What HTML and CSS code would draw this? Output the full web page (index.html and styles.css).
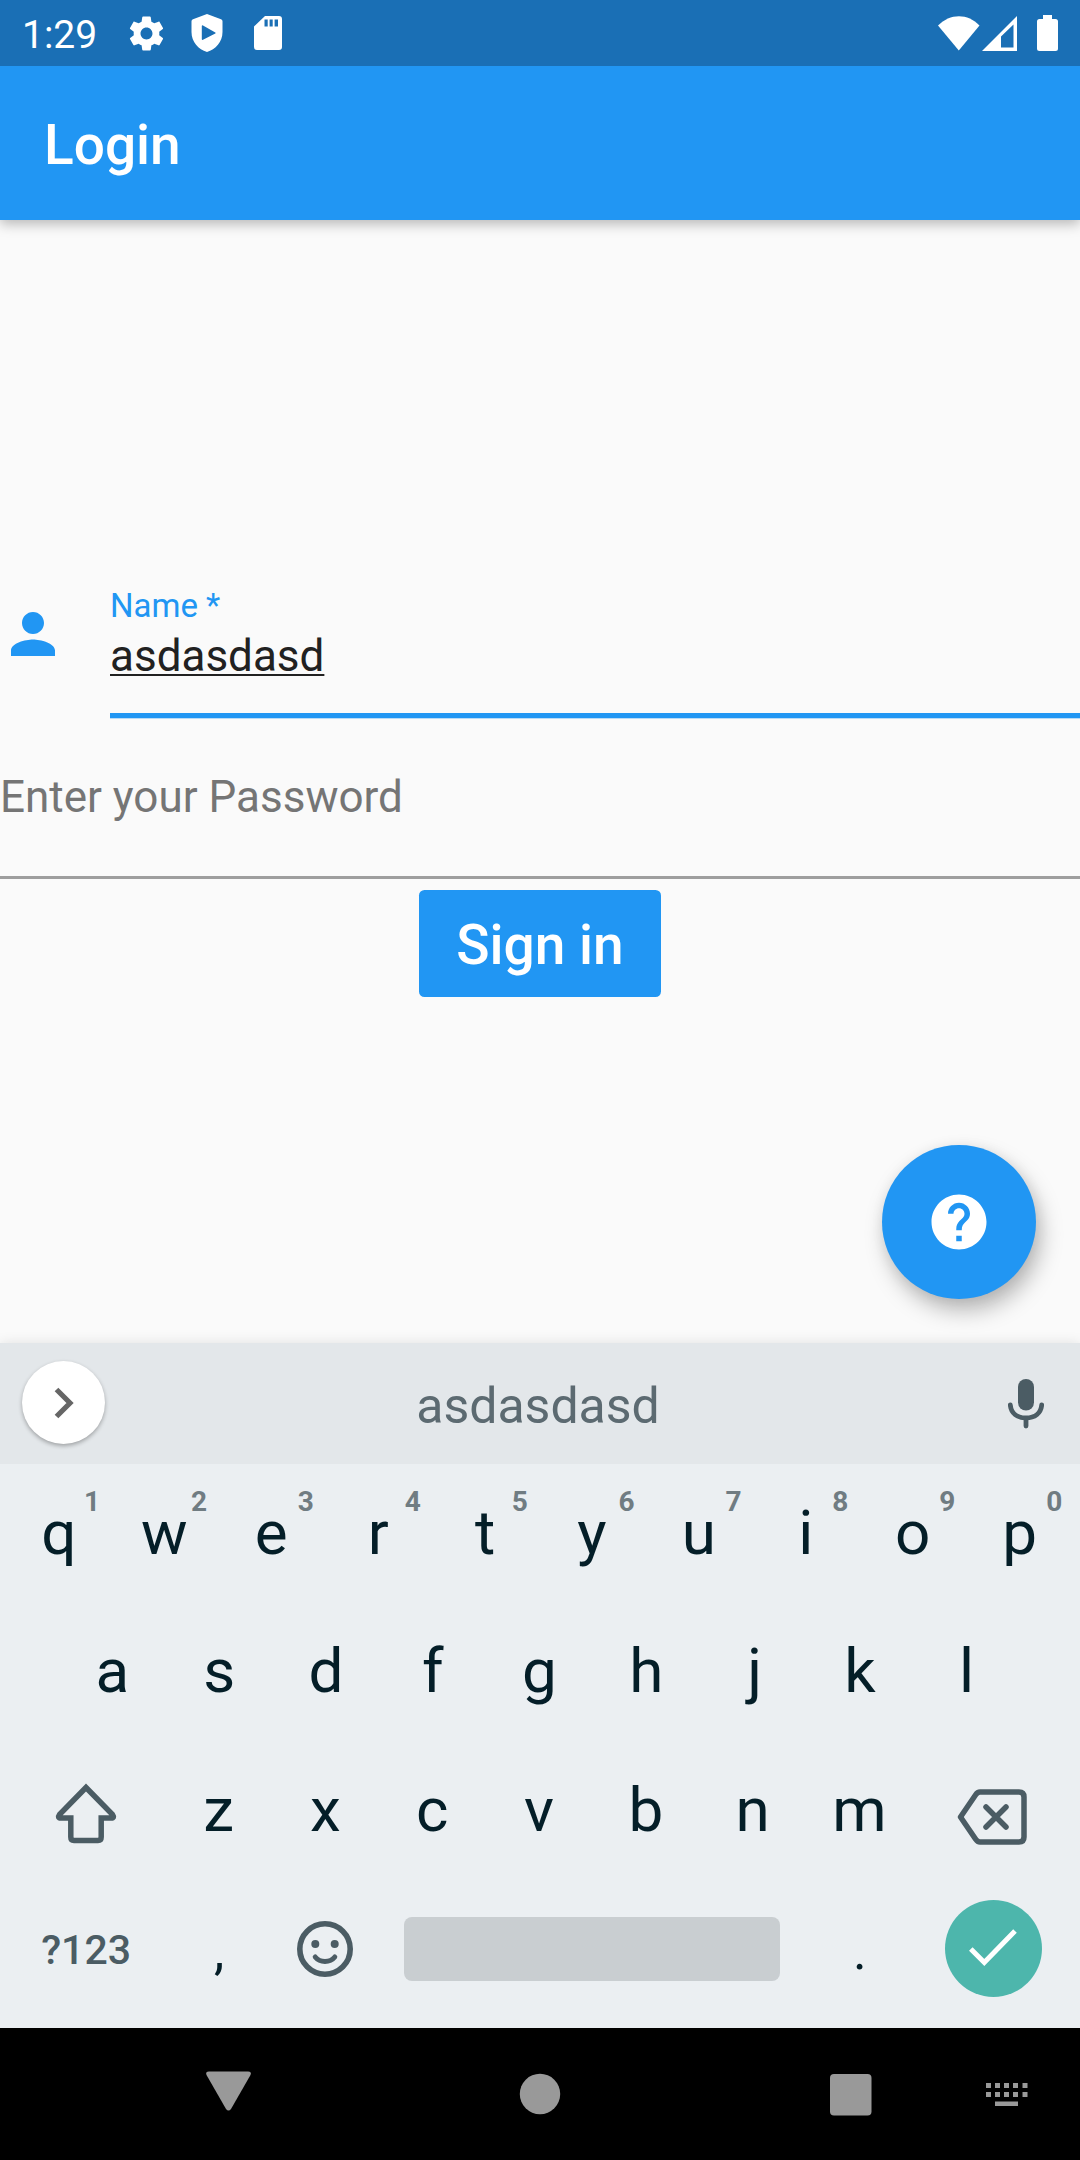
FILE: index.html
```html
<!DOCTYPE html>
<html lang="en">
<head>
<meta charset="utf-8">
<title>Login</title>
<link rel="stylesheet" href="styles.css">
</head>
<body>
<div class="screen">
  <header class="status-bar">
    <span class="clock">1:29</span>
    <svg class="status-gear" viewBox="0 0 24 24"><path d="M19.43 12.98c.04-.32.07-.64.07-.98s-.03-.66-.07-.98l2.11-1.65c.19-.15.24-.42.12-.64l-2-3.46c-.12-.22-.39-.3-.61-.22l-2.49 1c-.52-.4-1.08-.73-1.69-.98l-.38-2.65C14.46 2.18 14.25 2 14 2h-4c-.25 0-.46.18-.49.42l-.38 2.65c-.61.25-1.17.59-1.69.98l-2.49-1c-.23-.09-.49 0-.61.22l-2 3.46c-.13.22-.07.49.12.64l2.11 1.65c-.04.32-.07.65-.07.98s.03.66.07.98l-2.11 1.65c-.19.15-.24.42-.12.64l2 3.46c.12.22.39.3.61.22l2.49-1c.52.4 1.08.73 1.69.98l.38 2.65c.03.24.24.42.49.42h4c.25 0 .46-.18.49-.42l.38-2.65c.61-.25 1.17-.59 1.69-.98l2.49 1c.23.09.49 0 .61-.22l2-3.46c.12-.22.07-.49-.12-.64l-2.11-1.65zM12 15.5c-1.93 0-3.5-1.57-3.5-3.5s1.57-3.5 3.5-3.5 3.5 1.57 3.5 3.5-1.57 3.5-3.5 3.5z"/></svg>
    <svg class="status-shield" viewBox="0 0 32 38"><path fill-rule="evenodd" d="M16 0L30 5.200Q31.500 5.700 31.500 7.200V18C31.500 28 24.500 35.500 16 38C7.500 35.500.500 28 .500 18V7.200Q.500 5.700 2 5.200zM12 11.500Q10.800 11 10.800 12.300V25Q10.800 26.300 12 25.800L24.300 19.600Q25.200 19 24.300 18.400z"/></svg>
    <svg class="status-sd" viewBox="0 0 28 34"><path fill-rule="evenodd" d="M11 0H25Q28 0 28 3V31Q28 34 25 34H3Q0 34 0 31V10.500zM10.500 3.500V10.500H13.700V3.500zM15.600 3.500V10.500H18.700V3.500zM20.600 3.500V10.500H24V3.500z"/></svg>
    <span class="spacer"></span>
    <svg class="status-wifi" viewBox="0 0 42 35"><path d="M0 9.500C12 -3 30 -3 41.500 9.500L20.800 34.500z"/></svg>
    <svg class="status-signal" viewBox="0 0 35 35"><path fill-rule="evenodd" d="M35 0V35H0zM31.500 8.500L19 20.500V31.500H31.500z"/></svg>
    <svg class="status-battery" viewBox="0 0 21 36"><path d="M6 0H15V4H18.500Q21 4 21 6.500V33.500Q21 36 18.500 36H2.500Q0 36 0 33.500V6.500Q0 4 2.500 4H6z"/></svg>
  </header>
  <div class="app-bar"><h1>Login</h1></div>

  <main class="content">
    <div class="name-row">
      <svg class="person" viewBox="0 0 24 24"><path d="M12 12c2.210 0 4-1.790 4-4s-1.790-4-4-4-4 1.790-4 4 1.790 4 4 4zm0 2c-2.670 0-8 1.340-8 4v2h16v-2c0-2.660-5.330-4-8-4z"/></svg>
      <div class="field">
        <div class="label">Name *</div>
        <div class="value"><span>asdasdasd</span></div>
      </div>
    </div>
    <div class="password">Enter your Password</div>
    <button class="sign-in">Sign in</button>
    <button class="fab" aria-label="Help"><svg viewBox="0 0 24 24"><path d="M12 2C6.480 2 2 6.480 2 12s4.480 10 10 10 10-4.480 10-10S17.520 2 12 2zm1 17h-2v-2h2v2zm2.070-7.750l-.9.920C13.450 12.900 13 13.500 13 15h-2v-.5c0-1.100.450-2.100 1.170-2.830l1.240-1.260c.370-.360.590-.860.590-1.410 0-1.100-.9-2-2-2s-2 .9-2 2H8c0-2.210 1.790-4 4-4s4 1.790 4 4c0 .880-.360 1.680-.930 2.250z"/></svg></button>
  </main>

  <section class="keyboard">
    <div class="suggestions">
      <div class="expand"><svg viewBox="0 0 20 32"><path d="M2.500 2.500L16 16L2.500 29.500"/></svg></div>
      <span class="suggestion">asdasdasd</span>
      <svg class="mic" viewBox="0 0 36 50"><rect x="10" y="0" width="16" height="31.500" rx="8"/><path d="M2.300 26C3 34.500 9.500 39 18 39S33 34.500 33.700 26M18 39V47"/></svg>
    </div>
    <div class="keys">
      <div class="row row-top">
        <div class="key">q<sup>1</sup></div><div class="key">w<sup>2</sup></div><div class="key">e<sup>3</sup></div><div class="key">r<sup>4</sup></div><div class="key">t<sup>5</sup></div><div class="key">y<sup>6</sup></div><div class="key">u<sup>7</sup></div><div class="key">i<sup>8</sup></div><div class="key">o<sup>9</sup></div><div class="key">p<sup>0</sup></div>
      </div>
      <div class="row row-home">
        <div class="key">a</div><div class="key">s</div><div class="key">d</div><div class="key">f</div><div class="key">g</div><div class="key">h</div><div class="key shifted">j</div><div class="key">k</div><div class="key">l</div>
      </div>
      <div class="row row-lower">
        <div class="key wide"><svg class="shift" viewBox="0 0 62 62"><path d="M31 5.500L57.500 32.500Q60 36 56 36H46.200V55Q46.200 58.500 43 58.500H19Q15.800 58.500 15.800 55V36H6Q2 36 4.500 32.500z"/></svg></div>
        <div class="key">z</div><div class="key">x</div><div class="key">c</div><div class="key">v</div><div class="key">b</div><div class="key">n</div><div class="key">m</div>
        <div class="key wide"><svg class="backspace" viewBox="0 0 70 56"><path d="M23 3H62Q67 3 67 8V48Q67 53 62 53H23Q20.500 53 18.500 50L3.500 28L18.500 6Q20.500 3 23 3zM29 18L49 38M49 18L29 38"/></svg></div>
      </div>
      <div class="row row-bottom">
        <div class="key wide symbols">?123</div>
        <div class="key punct">,</div>
        <div class="key"><svg class="emoji" viewBox="0 0 56 56"><circle class="line" cx="28" cy="28" r="25.200"/><circle cx="18.300" cy="23" r="4"/><circle cx="37.700" cy="23" r="4"/><path class="line thin" d="M18.200 36C23 42 33 42 37.800 36"/></svg></div>
        <div class="key space"><div class="bar"></div></div>
        <div class="key punct">.</div>
        <div class="key wide"><div class="enter"><svg viewBox="0 0 48 38"><path d="M1.800 20L15.300 33.500L46 2"/></svg></div></div>
      </div>
    </div>
  </section>

  <nav class="nav-bar">
    <svg viewBox="0 0 1080 132">
      <path d="M209 43.500H248Q252 43.500 250.500 47L231 81Q228.500 84 226 81L206.500 47Q205 43.500 209 43.500z"/>
      <circle cx="540" cy="66" r="20.200"/>
      <rect x="830" y="46" width="41.500" height="41.500" rx="4"/>
      <path d="M986 55h5v5h-5zM995 55h5v5h-5zM1004 55h5v5h-5zM1013 55h5v5h-5zM1022.500 55h5v5h-5zM986 64h5v5h-5zM995 64h5v5h-5zM1004 64h5v5h-5zM1013 64h5v5h-5zM1022.500 64h5v5h-5zM995 73.500h23v4.500h-23z"/>
    </svg>
  </nav>
</div>
</body>
</html>
```
FILE: styles.css
```css
* { box-sizing: border-box; }
body { margin: 0; font-family: Roboto, sans-serif; }
svg { display: block; flex: none; }
button { border: 0; padding: 0; font: inherit; color: inherit; }

.screen {
  width: 1080px;
  height: 2160px;
  display: flex;
  flex-direction: column;
  overflow: hidden;
  background: #fafafa;
}

/* Status bar */
.status-bar {
  position: relative;
  z-index: 1;
  height: 66px;
  display: flex;
  align-items: center;
  padding: 0 22px;
  background: #1a6fb5;
  color: #fff;
  fill: #fff;
}
.clock { width: 104px; font-size: 39px; line-height: 66px; padding-top: 3px; }
.spacer { flex: 1; }
.status-gear { width: 41px; height: 41px; }
.status-shield { width: 32px; height: 38px; margin-left: 24px; }
.status-sd { width: 28px; height: 34px; margin-left: 31px; }
.status-wifi { width: 42px; height: 35px; margin-right: 2px; }
.status-signal { width: 35px; height: 35px; margin-right: 20px; }
.status-battery { width: 21px; height: 36px; }

/* App bar */
.app-bar {
  position: relative;
  height: 154px;
  padding: 0 44px;
  background: #2196f3;
  color: #fff;
  box-shadow: 0 4px 12px rgba(0, 0, 0, .27);
}
.app-bar h1 { margin: 0; font-size: 55px; font-weight: 500; line-height: 158px; }

/* Login form */
.content {
  position: relative;
  height: 1123px;
  padding-top: 367px;
  display: flex;
  flex-direction: column;
  align-items: center;
}
.name-row {
  width: 100%;
  height: 131px;
  display: flex;
  gap: 44px;
}
.person { width: 66px; height: 66px; margin-top: 14px; fill: #2196f3; }
.field {
  flex: 1;
  border-bottom: 5px solid #2196f3;
  box-shadow: 0 1px rgba(33, 150, 243, .3);
}
.label { font-size: 33px; line-height: 38px; color: #2196f3; }
.value { margin-top: 5px; font-size: 44px; line-height: 52px; color: #212121; }
.value span {
  text-decoration: underline;
  text-decoration-thickness: 2px;
  text-underline-offset: 3px;
  text-decoration-skip-ink: none;
}
.password {
  width: 100%;
  height: 161px;
  padding-top: 53px;
  font-size: 44px;
  line-height: 52px;
  color: #757575;
  border-bottom: 3px solid #9e9e9e;
}
.sign-in {
  width: 242px;
  height: 107px;
  margin-top: 11px;
  border-radius: 5.5px;
  background: #2196f3;
  color: #fff;
  font-size: 55px;
  font-weight: 500;
  padding-top: 4px;
  line-height: 103px;
}
.fab {
  position: absolute;
  right: 44px;
  bottom: 44px;
  width: 154px;
  height: 154px;
  border-radius: 50%;
  display: flex;
  align-items: center;
  justify-content: center;
  background: #2196f3;
  box-shadow: 5px 12px 22px rgba(0, 0, 0, .26), 1px 2px 14px rgba(0, 0, 0, .07);
}
.fab svg { width: 66px; height: 66px; fill: #fff; }

/* Keyboard */
.keyboard {
  position: relative;
  height: 685px;
  background: #ebeff2;
  box-shadow: 0 0 12px rgba(0, 0, 0, .1);
}
.suggestions {
  height: 121px;
  display: grid;
  grid-template-columns: 83px 1fr 36px;
  align-items: center;
  padding: 0 36px 0 22px;
  background: #e3e7ea;
}
.expand {
  width: 83px;
  height: 83px;
  margin-bottom: 2px;
  border-radius: 50%;
  display: flex;
  align-items: center;
  justify-content: center;
  background: #fff;
  box-shadow: 0 2px 4px rgba(0, 0, 0, .3);
}
.expand svg { width: 20px; height: 32px; fill: none; stroke: #666; stroke-width: 5.2; }
.suggestion { padding: 4px 37px 0 0; font-size: 50px; line-height: 58px; text-align: center; color: #5c6a71; }
.mic { width: 36px; height: 50px; fill: #4b5c64; }
.mic path { fill: none; stroke: #4b5c64; stroke-width: 4.800; stroke-linecap: round; }
.row { height: 138px; display: flex; padding: 0 7px 0 5px; }
.row-top { height: 137px; padding: 0 7px 0 4px; }
.row-home { padding: 0 60px 0 59px; }
.row-lower { height: 141px; }
.key {
  position: relative;
  flex: 1 1 0;
  display: flex;
  align-items: center;
  justify-content: center;
  font-size: 62px;
  color: #041e28;
}
.row-top .key:first-child, .key.shifted { text-indent: 3px; }
.key.wide { flex-grow: 1.5; }
.key.space { flex-grow: 4; }
.key sup {
  position: absolute;
  top: 22px;
  left: 80px;
  font-size: 28px;
  line-height: 32px;
  font-weight: 700;
  text-indent: 0;
  color: #707c82;
}
.shift, .backspace { fill: none; stroke: #4b5c64; stroke-width: 5.500; stroke-linecap: round; stroke-linejoin: round; }
.shift { width: 62px; height: 62px; margin-top: 6px; margin-left: 1px; stroke-linejoin: miter; }
.backspace { width: 70px; height: 56px; margin-top: 14px; margin-right: 1px; }
.key.symbols { font-size: 41px; font-weight: 500; padding-top: 2px; text-indent: 2px; color: #4b5c64; }
.key.punct { font-size: 52px; padding-top: 4px; text-indent: 1px; }
.emoji { width: 56px; height: 56px; margin-right: 1px; fill: #4b5c64; }
.emoji .line { fill: none; stroke: #4b5c64; stroke-width: 5.600; stroke-linecap: round; }
.emoji .thin { stroke-width: 5; }
.bar { width: 376px; height: 64px; border-radius: 8px; background: #c9ced1; }
.enter {
  width: 97px;
  height: 97px;
  margin-bottom: 2px;
  margin-left: 1px;
  border-radius: 50%;
  display: flex;
  align-items: center;
  justify-content: center;
  background: #4db6ac;
}
.enter svg { width: 48px; height: 38px; fill: none; stroke: #fff; stroke-width: 5; }

/* Navigation bar */
.nav-bar { position: relative; height: 132px; background: #000; fill: #999; }
.nav-bar svg { width: 1080px; height: 132px; }
```
